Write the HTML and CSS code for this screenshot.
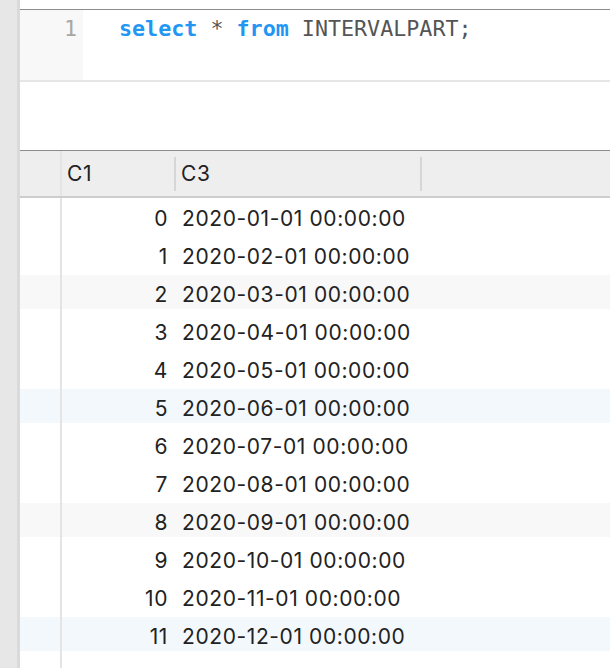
FILE: index.html
```html
<!DOCTYPE html>
<html>
<head>
<meta charset="utf-8">
<link rel="stylesheet" href="styles.css">
</head>
<body>
<div class="app">
  <div class="sidebar"></div>
  <div class="main">
    <div class="topgap"></div>
    <div class="editor">
      <div class="gutter"><span class="lineno">1</span></div>
      <div class="code"><span class="kw">select</span> <span class="op">*</span> <span class="kw">from</span> <span class="id">INTERVALPART;</span></div>
    </div>
    <div class="spacer"></div>
    <div class="grid">
      <div class="header">
        <div class="idx"></div>
        <div class="hcell c1">C1</div>
        <div class="hcell c3">C3</div>
        <div class="hrest"></div>
      </div>
      <div class="rows">
        <div class="row"><div class="idx"></div><div class="cell c1">0</div><div class="cell c3">2020-01-01 00:00:00</div></div>
        <div class="row"><div class="idx"></div><div class="cell c1">1</div><div class="cell c3">2020-02-01 00:00:00</div></div>
        <div class="row alt-gray"><div class="idx"></div><div class="cell c1">2</div><div class="cell c3">2020-03-01 00:00:00</div></div>
        <div class="row"><div class="idx"></div><div class="cell c1">3</div><div class="cell c3">2020-04-01 00:00:00</div></div>
        <div class="row"><div class="idx"></div><div class="cell c1">4</div><div class="cell c3">2020-05-01 00:00:00</div></div>
        <div class="row alt-blue"><div class="idx"></div><div class="cell c1">5</div><div class="cell c3">2020-06-01 00:00:00</div></div>
        <div class="row"><div class="idx"></div><div class="cell c1">6</div><div class="cell c3">2020-07-01 00:00:00</div></div>
        <div class="row"><div class="idx"></div><div class="cell c1">7</div><div class="cell c3">2020-08-01 00:00:00</div></div>
        <div class="row alt-gray"><div class="idx"></div><div class="cell c1">8</div><div class="cell c3">2020-09-01 00:00:00</div></div>
        <div class="row"><div class="idx"></div><div class="cell c1">9</div><div class="cell c3">2020-10-01 00:00:00</div></div>
        <div class="row"><div class="idx"></div><div class="cell c1">10</div><div class="cell c3">2020-11-01 00:00:00</div></div>
        <div class="row alt-blue"><div class="idx"></div><div class="cell c1">11</div><div class="cell c3">2020-12-01 00:00:00</div></div>
        <div class="row"><div class="idx"></div><div class="cell c1"></div><div class="cell c3"></div></div>
      </div>
    </div>
  </div>
</div>
</body>
</html>
```

FILE: styles.css
```css
html, body {
  margin: 0;
  padding: 0;
  background: #ffffff;
  height: 100%;
  overflow: hidden;
}

.app {
  display: flex;
  height: 668px;
}

.sidebar {
  width: 17px;
  flex: none;
  background: #e7e7e7;
  border-right: 3px solid #dadada;
}

.main {
  flex: 1;
  display: flex;
  flex-direction: column;
  min-width: 0;
  overflow: hidden;
}

.topgap {
  flex: none;
  height: 9px;
  border-bottom: 1px solid #8c8c8c;
}

.editor {
  flex: none;
  height: 70px;
  display: flex;
  border-bottom: 2px solid #e6e6e6;
  font-family: "DejaVu Sans Mono", monospace;
  font-size: 21.7px;
  line-height: 30px;
}

.gutter {
  width: 63px;
  flex: none;
  background: #f8f8f8;
  text-align: right;
  box-sizing: border-box;
  padding: 4px 6px 0 0;
}

.lineno {
  color: #a6a6a6;
}

.code {
  padding: 4px 0 0 36px;
  white-space: pre;
  color: #555555;
}

.kw {
  color: #2196f3;
  font-weight: bold;
}

.op {
  color: #555555;
}

.id {
  color: #555555;
}

.spacer {
  flex: none;
  height: 68px;
  border-bottom: 1px solid #8c8c8c;
}

.grid {
  flex: none;
  font-family: "Inter", "Noto Sans", sans-serif;
  font-size: 21px;
  letter-spacing: 0.6px;
  color: #222222;
}

.header {
  display: flex;
  height: 45px;
  background: #eeeeee;
  border-bottom: 2px solid #cdcdcd;
  align-items: center;
}

.idx {
  width: 40px;
  flex: none;
  align-self: stretch;
  border-right: 2px solid #e4e4e4;
}

.hcell {
  height: 34px;
  line-height: 34px;
  box-sizing: border-box;
  border-right: 2px solid #d6d6d6;
  padding-left: 5px;
  margin-top: 1px;
}

.header .c1 {
  width: 114px;
}

.header .c3 {
  width: 246px;
}

.hrest {
  flex: 1;
}

.rows {
  display: flex;
  flex-direction: column;
}

.row {
  display: flex;
  flex: none;
  height: 38px;
  line-height: 32px;
}

.alt-gray {
  background: linear-gradient(transparent 1px, #f8f8f8 1px, #f8f8f8 35px, transparent 35px);
}

.alt-blue {
  background: linear-gradient(transparent 1px, #f3f8fd 1px, #f3f8fd 35px, transparent 35px);
}

.cell {
  white-space: nowrap;
  padding-top: 5px;
}

.row .c1 {
  width: 112px;
  box-sizing: border-box;
  text-align: right;
  padding-right: 6px;
}

.row .c3 {
  padding-left: 8px;
}
```
